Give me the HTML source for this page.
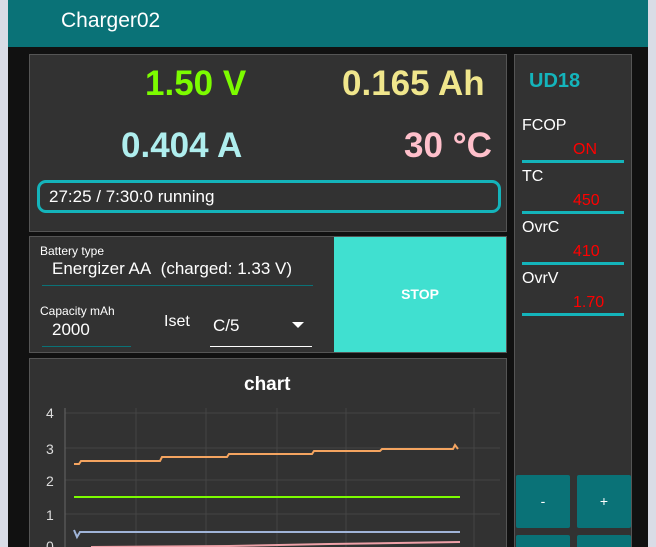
<!DOCTYPE html><html><head><style>
*{margin:0;padding:0;box-sizing:border-box}
html,body{width:656px;height:547px;overflow:hidden}
body{background:#d9dce6;position:relative;font-family:"Liberation Sans",sans-serif}
.a{position:absolute}
.win{left:8px;top:0;width:640px;height:547px;background:#111}
.title{left:8px;top:0;width:640px;height:47px;background:#0a7277;color:#fff;font-size:21px;padding:9px 0 0 53px}
.p{background:#323232;border:1px solid #555}
.big{font-weight:bold;font-size:35px}
.lab{color:#fff;font-size:16px}
.val{color:#f00;font-size:16px}
.ul{height:3px;background:#14b4bb}
.btn{background:#0a7277;color:#fff;font-size:14px;text-align:center;border-radius:2px}
</style></head><body>
<div class="a win"></div>
<div class="a title">Charger02</div>
<div class="a p" style="left:29px;top:54px;width:478px;height:178px"></div>
<div class="a big" style="left:145px;top:64px;color:#7cfc00">1.50 V</div>
<div class="a big" style="left:342px;top:64px;color:#f0e68c">0.165 Ah</div>
<div class="a big" style="left:121px;top:126px;color:#afeeee">0.404 A</div>
<div class="a big" style="left:404px;top:126px;color:#ffc0cb">30 °C</div>
<div class="a" style="left:37px;top:180px;width:464px;height:33px;border:3px solid #14b4bb;border-radius:9px;color:#fff;font-size:17px;padding:4px 0 0 9px">27:25 / 7:30:0 running</div>
<div class="a p" style="left:29px;top:236px;width:478px;height:117px"></div>
<div class="a" style="left:40px;top:244px;color:#fff;font-size:12px">Battery type</div>
<div class="a" style="left:52px;top:259px;color:#fff;font-size:17px">Energizer AA&nbsp; (charged: 1.33 V)</div>
<div class="a" style="left:42px;top:285px;width:271px;height:1px;background:#0a7277"></div>
<div class="a" style="left:40px;top:304px;color:#fff;font-size:12px">Capacity mAh</div>
<div class="a" style="left:52px;top:320px;color:#fff;font-size:17px">2000</div>
<div class="a" style="left:42px;top:346px;width:89px;height:1px;background:#0a7277"></div>
<div class="a" style="left:164px;top:313px;color:#fff;font-size:16px">Iset</div>
<div class="a" style="left:213px;top:316px;color:#fff;font-size:17px">C/5</div>
<div class="a" style="left:292px;top:322px;width:0;height:0;border-left:6px solid transparent;border-right:6px solid transparent;border-top:6px solid #fff"></div>
<div class="a" style="left:210px;top:346px;width:102px;height:1px;background:#fff"></div>
<div class="a" style="left:334px;top:237px;width:172px;height:115px;background:#40e0d0;color:#fff;font-weight:bold;font-size:14px;text-align:center;line-height:115px">STOP</div>
<div class="a p" style="left:29px;top:358px;width:478px;height:200px"></div>
<div class="a" style="left:244px;top:374px;color:#fff;font-weight:bold;font-size:19px">chart</div>
<svg class="a" style="left:29px;top:358px" width="478" height="189">
<g stroke="#444" stroke-width="1">
<line x1="36" y1="55" x2="471" y2="55"/><line x1="36" y1="90" x2="471" y2="90"/><line x1="36" y1="122" x2="471" y2="122"/><line x1="36" y1="156" x2="471" y2="156"/>
<line x1="107" y1="50" x2="107" y2="189"/><line x1="177" y1="50" x2="177" y2="189"/><line x1="248" y1="50" x2="248" y2="189"/><line x1="317" y1="50" x2="317" y2="189"/><line x1="445" y1="50" x2="445" y2="189"/>
</g>
<line x1="36" y1="50" x2="36" y2="189" stroke="#666"/>
<g fill="#ddd" font-size="14" font-family="Liberation Sans"><text x="17" y="60">4</text><text x="17" y="96">3</text><text x="17" y="128">2</text><text x="17" y="162">1</text><text x="17" y="193">0</text></g>
<polyline fill="none" stroke="#f4a460" stroke-width="2" points="45,106 50,106 52,103 131,103 133,99 198,99 200,96 283,96 285,93 351,93 353,91 424,91 426,87 429,91"/>
<line x1="45" y1="139" x2="431" y2="139" stroke="#7cfc00" stroke-width="2"/>
<polyline fill="none" stroke="#a0b4d8" stroke-width="2" points="45,172 48,179 51,174 431,174"/>
<polyline fill="none" stroke="#f0a0a8" stroke-width="2" points="62,189 200,188 300,186 431,184"/>
</svg>
<div class="a p" style="left:514px;top:54px;width:118px;height:500px"></div>
<div class="a" style="left:529px;top:70px;color:#14b4bb;font-weight:bold;font-size:20px">UD18</div>
<div class="a lab" style="left:522px;top:117px">FCOP</div><div class="a val" style="left:573px;top:141px">ON</div><div class="a ul" style="left:522px;top:160px;width:102px"></div>
<div class="a lab" style="left:522px;top:168px">TC</div><div class="a val" style="left:573px;top:192px">450</div><div class="a ul" style="left:522px;top:211px;width:102px"></div>
<div class="a lab" style="left:522px;top:219px">OvrC</div><div class="a val" style="left:573px;top:243px">410</div><div class="a ul" style="left:522px;top:262px;width:102px"></div>
<div class="a lab" style="left:522px;top:270px">OvrV</div><div class="a val" style="left:573px;top:294px">1.70</div><div class="a ul" style="left:522px;top:313px;width:102px"></div>
<div class="a btn" style="left:516px;top:475px;width:54px;height:53px;line-height:53px">-</div>
<div class="a btn" style="left:577px;top:475px;width:54px;height:53px;line-height:53px">+</div>
<div class="a btn" style="left:516px;top:535px;width:54px;height:20px"></div>
<div class="a btn" style="left:577px;top:535px;width:54px;height:20px"></div>
</body></html>
